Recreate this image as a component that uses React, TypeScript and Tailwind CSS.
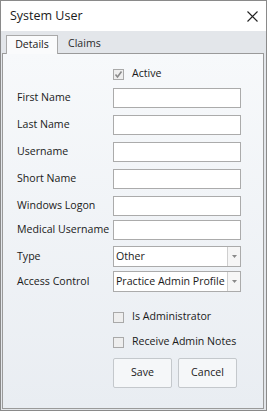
import React from "react";

const font = { fontFamily: '"Segoe UI", "Open Sans", "Noto Sans", sans-serif' };

function Label({ children }: { children: React.ReactNode }) {
  return <div className="w-[96px] shrink-0 text-[10.6px] text-[#1a1a1a] whitespace-nowrap">{children}</div>;
}

function TextRow({ label }: { label: string }) {
  return (
    <div className="flex items-center h-[20px]">
      <Label>{label}</Label>
      <div className="w-[128px] h-[20px] bg-white border border-[#ababab]" />
    </div>
  );
}

function SelectRow({ label, value }: { label: string; value: string }) {
  return (
    <div className="flex items-center h-[21px]">
      <Label>{label}</Label>
      <div className="w-[128px] h-[21px] bg-white border border-[#ababab] flex">
        <div className="flex-1 overflow-hidden whitespace-nowrap text-[10.6px] leading-[19px] pl-[2px] text-[#1a1a1a]">{value}</div>
        <div className="w-[13px] border-l border-[#cfcfcf] bg-[#f6f6f6] flex items-center justify-center">
          <svg width="5" height="3" viewBox="0 0 5 3">
            <path d="M0 0h5L2.5 3z" fill="#8a8a8a" />
          </svg>
        </div>
      </div>
    </div>
  );
}

function Check({ label, checked }: { label: string; checked?: boolean }) {
  return (
    <div className="flex items-center h-[14px] pl-[96px]">
      <div className="w-[11px] h-[11px] border border-[#a9a9a9] bg-[#eeeeee] flex items-center justify-center">
        {checked && (
          <svg width="9" height="9" viewBox="0 0 9 9">
            <path d="M1.5 4.5 L3.5 7 L7.5 1.5" stroke="#8a8a8a" strokeWidth="1.6" fill="none" />
          </svg>
        )}
      </div>
      <span className="ml-[8px] text-[10.6px] text-[#1a1a1a]">{label}</span>
    </div>
  );
}

export default function App() {
  return (
    <div className="w-[268px] h-[414px] bg-white" style={font}>
      <div className="w-[267px] h-[411px] border border-[#8a8a8a] flex flex-col">
        <div className="h-[30px] flex items-center justify-between pl-[9px] pr-[8px] bg-white">
          <span className="text-[12.5px] text-[#1a1a1a]">System User</span>
          <svg width="11" height="11" viewBox="0 0 11 11">
            <path d="M0.5 0.5 L10.5 10.5 M10.5 0.5 L0.5 10.5" stroke="#222" strokeWidth="1.1" />
          </svg>
        </div>
        <div className="flex-1 bg-[#e3e6ea] flex flex-col px-[1px]">
          <div className="h-[22px] flex items-end pl-[4px] relative">
            <div className="h-[19px] w-[52px] bg-[#fafbfc] border border-b-0 border-[#a9a9a9] text-[10.6px] text-[#1a1a1a] flex items-center justify-center relative top-[1px] z-10">
              Details
            </div>
            <div className="h-[19px] text-[10.6px] text-[#2a2a2a] flex items-center pl-[10px]">Claims</div>
          </div>
          <div className="flex-1 border border-[#9a9a9a] bg-gradient-to-b from-[#f7f9fb] to-[#e9edf2] pl-[14px] pt-[13px] mr-[1px]">
            <Check label="Active" checked />
            <div className="flex flex-col gap-[7px] mt-[7px]">
              <TextRow label="First Name" />
              <TextRow label="Last Name" />
              <TextRow label="Username" />
              <TextRow label="Short Name" />
              <TextRow label="Windows Logon" />
            </div>
            <div className="mt-[4px]">
              <TextRow label="Medical Username" />
            </div>
            <div className="flex flex-col gap-[4px] mt-[6px]">
              <SelectRow label="Type" value="Other" />
              <SelectRow label="Access Control" value="Practice Admin Profile" />
            </div>
            <div className="mt-[18px]">
              <Check label="Is Administrator" />
            </div>
            <div className="mt-[11px]">
              <Check label="Receive Admin Notes" />
            </div>
            <div className="flex gap-[6px] pl-[96px] mt-[9px]">
              <div className="w-[59px] h-[30px] rounded-[2px] border border-[#c4c8cc] bg-[#f5f7f9] text-[10.6px] text-[#1a1a1a] flex items-center justify-center">Save</div>
              <div className="w-[59px] h-[30px] rounded-[2px] border border-[#c4c8cc] bg-[#f5f7f9] text-[10.6px] text-[#1a1a1a] flex items-center justify-center">Cancel</div>
            </div>
          </div>
          <div className="h-[1px]" />
        </div>
      </div>
    </div>
  );
}
